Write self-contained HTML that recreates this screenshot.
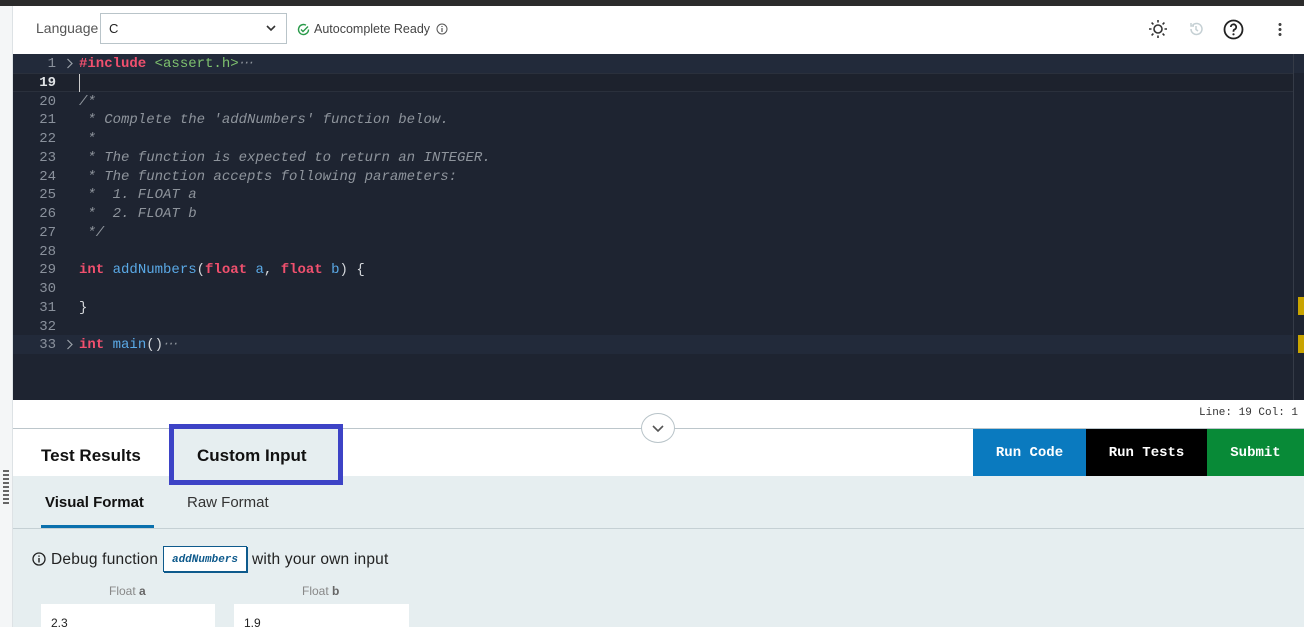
<!DOCTYPE html>
<html><head><meta charset="utf-8"><style>
*{margin:0;padding:0;box-sizing:border-box}
body{width:1304px;height:627px;overflow:hidden;background:#fff;font-family:"Liberation Sans",sans-serif;position:relative}
.abs{position:absolute}
.code{font-family:"Liberation Mono",monospace;font-size:14px;line-height:18.75px;white-space:pre}
.ln{color:#8a919c;width:56px;text-align:right;display:block}
.k{color:#f0506e;font-weight:bold}.s{color:#7ec16e}.f{color:#5aa9e6}.c{color:#8e949c;font-style:italic}.p{color:#d4d7db}
</style></head><body>
<div class="abs" style="left:0;top:0;width:1304px;height:6px;background:#2b2b2b"></div>
<div class="abs" style="left:0;top:6px;width:13px;height:621px;background:#f4f6f7;border-right:1px solid #dde2e5"></div>
<div class="abs" style="left:3px;top:470px;width:6px;height:34px;background:repeating-linear-gradient(#666 0 2px,transparent 2px 4px)"></div>
<!-- toolbar -->
<div class="abs" style="left:36px;top:20px;font-size:14px;color:#555">Language</div>
<div class="abs" style="left:100px;top:13px;width:187px;height:31px;border:1px solid #b9c4c9;font-size:13px;padding:7px 8px;color:#222">C
<svg class="abs" style="right:10px;top:11px" width="10" height="7" viewBox="0 0 10 7"><path d="M1 1l4 4 4-4" stroke="#333" stroke-width="1.6" fill="none"/></svg></div>
<svg class="abs" style="left:297px;top:23px" width="13" height="13" viewBox="0 0 13 13"><path d="M11.5 6.5A5 5 0 1 1 9 2.2" stroke="#2a9a4a" stroke-width="1.4" fill="none"/><path d="M4 6.5l2 2 5-5" stroke="#2a9a4a" stroke-width="1.4" fill="none"/></svg>
<div class="abs" style="left:314px;top:22px;font-size:12.5px;color:#444">Autocomplete Ready</div>
<svg class="abs" style="left:436px;top:23px" width="12" height="12" viewBox="0 0 12 12"><circle cx="6" cy="6" r="5" stroke="#555" fill="none"/><path d="M6 5v4M6 3v1" stroke="#555" stroke-width="1.2"/></svg>
<svg class="abs" style="left:1148px;top:19px" width="20" height="20" viewBox="0 0 20 20"><circle cx="10" cy="10" r="4" stroke="#333" stroke-width="1.6" fill="none"/><g stroke="#333" stroke-width="1.6"><path d="M10 1v2.5M10 16.5V19M1 10h2.5M16.5 10H19M3.6 3.6l1.8 1.8M14.6 14.6l1.8 1.8M3.6 16.4l1.8-1.8M14.6 5.4l1.8-1.8"/></g></svg>
<svg class="abs" style="left:1188px;top:21px" width="16" height="16" viewBox="0 0 16 16"><path d="M3 8a5.5 5.5 0 1 0 1.6-3.9M3 2v3h3M8 5v3.5l2 1.5" stroke="#c5d0d4" stroke-width="1.5" fill="none"/></svg>
<svg class="abs" style="left:1223px;top:19px" width="21" height="21" viewBox="0 0 21 21"><circle cx="10.5" cy="10.5" r="9" stroke="#222" stroke-width="1.8" fill="none"/><path d="M7.8 8a2.7 2.7 0 1 1 3.5 2.6c-.6.3-.8.8-.8 1.4v.8" stroke="#222" stroke-width="1.8" fill="none"/><circle cx="10.5" cy="15.3" r="1.1" fill="#222"/></svg>
<div class="abs" style="left:1278px;top:22px;width:4px;height:14px;background:radial-gradient(circle,#444 1.4px,transparent 1.6px) 0 0/4px 5px"></div>
<!-- editor -->
<div class="abs" style="left:13px;top:54px;width:1291px;height:346px;background:#1e2431"></div>
<div class="abs" style="left:13px;top:54px;width:1291px;height:19px;background:#222a3a"></div>
<div class="abs" style="left:13px;top:73px;width:1280px;height:19px;border-top:1px solid #2a303c;border-bottom:1px solid #2a303c;background:#1d222d"></div>
<div class="abs" style="left:13px;top:335px;width:1280px;height:19px;background:#222a3a"></div>
<div class="abs" style="left:1293px;top:54px;width:1px;height:346px;background:#353b47"></div>
<div class="abs" style="left:1298px;top:297px;width:6px;height:18px;background:#c9a400"></div>
<div class="abs" style="left:1298px;top:335px;width:6px;height:18px;background:#c9a400"></div>
<div class="abs" style="left:79px;top:74px;width:1px;height:18px;background:#ccc"></div>
<svg class="abs" style="left:66px;top:58px" width="8" height="11" viewBox="0 0 8 11"><path d="M1.5 1l4.5 4.5L1.5 10" stroke="#9aa0a8" stroke-width="1.2" fill="none"/></svg>
<svg class="abs" style="left:66px;top:339px" width="8" height="11" viewBox="0 0 8 11"><path d="M1.5 1l4.5 4.5L1.5 10" stroke="#9aa0a8" stroke-width="1.2" fill="none"/></svg>
<div class="abs code" style="left:0;top:55px"><span class="ln" style="position:absolute;left:0">1
<b style="color:#e0e3e6">19</b>
20
21
22
23
24
25
26
27
28
29
30
31
32
33</span><span style="position:absolute;left:79px"><span class="k">#include</span> <span class="s">&lt;assert.h&gt;</span><span class="c">⋯</span>

<span class="c">/*</span>
<span class="c"> * Complete the 'addNumbers' function below.</span>
<span class="c"> *</span>
<span class="c"> * The function is expected to return an INTEGER.</span>
<span class="c"> * The function accepts following parameters:</span>
<span class="c"> *  1. FLOAT a</span>
<span class="c"> *  2. FLOAT b</span>
<span class="c"> */</span>

<span class="k">int</span> <span class="f">addNumbers</span><span class="p">(</span><span class="k">float</span> <span class="f">a</span><span class="p">,</span> <span class="k">float</span> <span class="f">b</span><span class="p">) {</span>

<span class="p">}</span>

<span class="k">int</span> <span class="f">main</span><span class="p">()</span><span class="c">⋯</span></span></div>
<!-- status -->
<div class="abs" style="left:1199px;top:407px;font-family:'Liberation Mono',monospace;font-size:11px;color:#333">Line: 19 Col: 1</div>
<div class="abs" style="left:13px;top:428px;width:1291px;height:1px;background:#bcc6cb"></div>
<div class="abs" style="left:641px;top:413px;width:34px;height:30px;border:1px solid #b9c4c9;border-radius:50%;background:#fff"></div>
<svg class="abs" style="left:651px;top:424px" width="14" height="9" viewBox="0 0 14 9"><path d="M2 2l5 5 5-5" stroke="#555" stroke-width="1.6" fill="none"/></svg>
<!-- tabs -->
<div class="abs" style="left:13px;top:476px;width:1291px;height:151px;background:#e6eef0"></div>
<div class="abs" style="left:41px;top:446px;font-size:17px;font-weight:bold;color:#111">Test Results</div>
<div class="abs" style="left:169px;top:424px;width:174px;height:61px;border:5px solid #3d43c6;background:#e6eef0"></div>
<div class="abs" style="left:197px;top:446px;font-size:17px;font-weight:bold;color:#111">Custom Input</div>
<div class="abs" style="left:973px;top:429px;width:113px;height:47px;background:#0a7abf;color:#fff;font:bold 14px 'Liberation Mono',monospace;text-align:center;line-height:48px">Run Code</div>
<div class="abs" style="left:1086px;top:429px;width:121px;height:47px;background:#000;color:#fff;font:bold 14px 'Liberation Mono',monospace;text-align:center;line-height:48px">Run Tests</div>
<div class="abs" style="left:1207px;top:429px;width:97px;height:47px;background:#088a37;color:#fff;font:bold 14px 'Liberation Mono',monospace;text-align:center;line-height:48px">Submit</div>
<div class="abs" style="left:45px;top:494px;font-size:15px;font-weight:bold;color:#111">Visual Format</div>
<div class="abs" style="left:187px;top:494px;font-size:15px;color:#333">Raw Format</div>
<div class="abs" style="left:41px;top:525px;width:113px;height:3px;background:#0a70ad"></div>
<div class="abs" style="left:13px;top:528px;width:1291px;height:1px;background:#c5d0d4"></div>
<svg class="abs" style="left:32px;top:552px" width="14" height="14" viewBox="0 0 14 14"><circle cx="7" cy="7" r="6" stroke="#222" stroke-width="1.3" fill="none"/><path d="M7 6v4.5M7 3.5v1.3" stroke="#222" stroke-width="1.4"/></svg>
<div class="abs" style="left:51px;top:551px;font-size:15.5px;color:#222;letter-spacing:0.2px">Debug function</div>
<div class="abs" style="left:163px;top:546px;width:84px;height:26px;border:1px solid #0e5a8c;box-shadow:1px 1px 0 #0e5a8c;background:#fff;font:bold italic 11px 'Liberation Mono',monospace;color:#0e5a8c;text-align:center;line-height:26px">addNumbers</div>
<div class="abs" style="left:252px;top:551px;font-size:15.5px;color:#222;letter-spacing:0.2px">with your own input</div>
<div class="abs" style="left:109px;top:584px;font-size:12px;color:#888">Float <b style="color:#666">a</b></div>
<div class="abs" style="left:302px;top:584px;font-size:12px;color:#888">Float <b style="color:#666">b</b></div>
<div class="abs" style="left:41px;top:604px;width:174px;height:30px;background:#fff;font-size:12px;padding:12px 10px;color:#222">2.3</div>
<div class="abs" style="left:234px;top:604px;width:175px;height:30px;background:#fff;font-size:12px;padding:12px 10px;color:#222">1.9</div>
</body></html>
